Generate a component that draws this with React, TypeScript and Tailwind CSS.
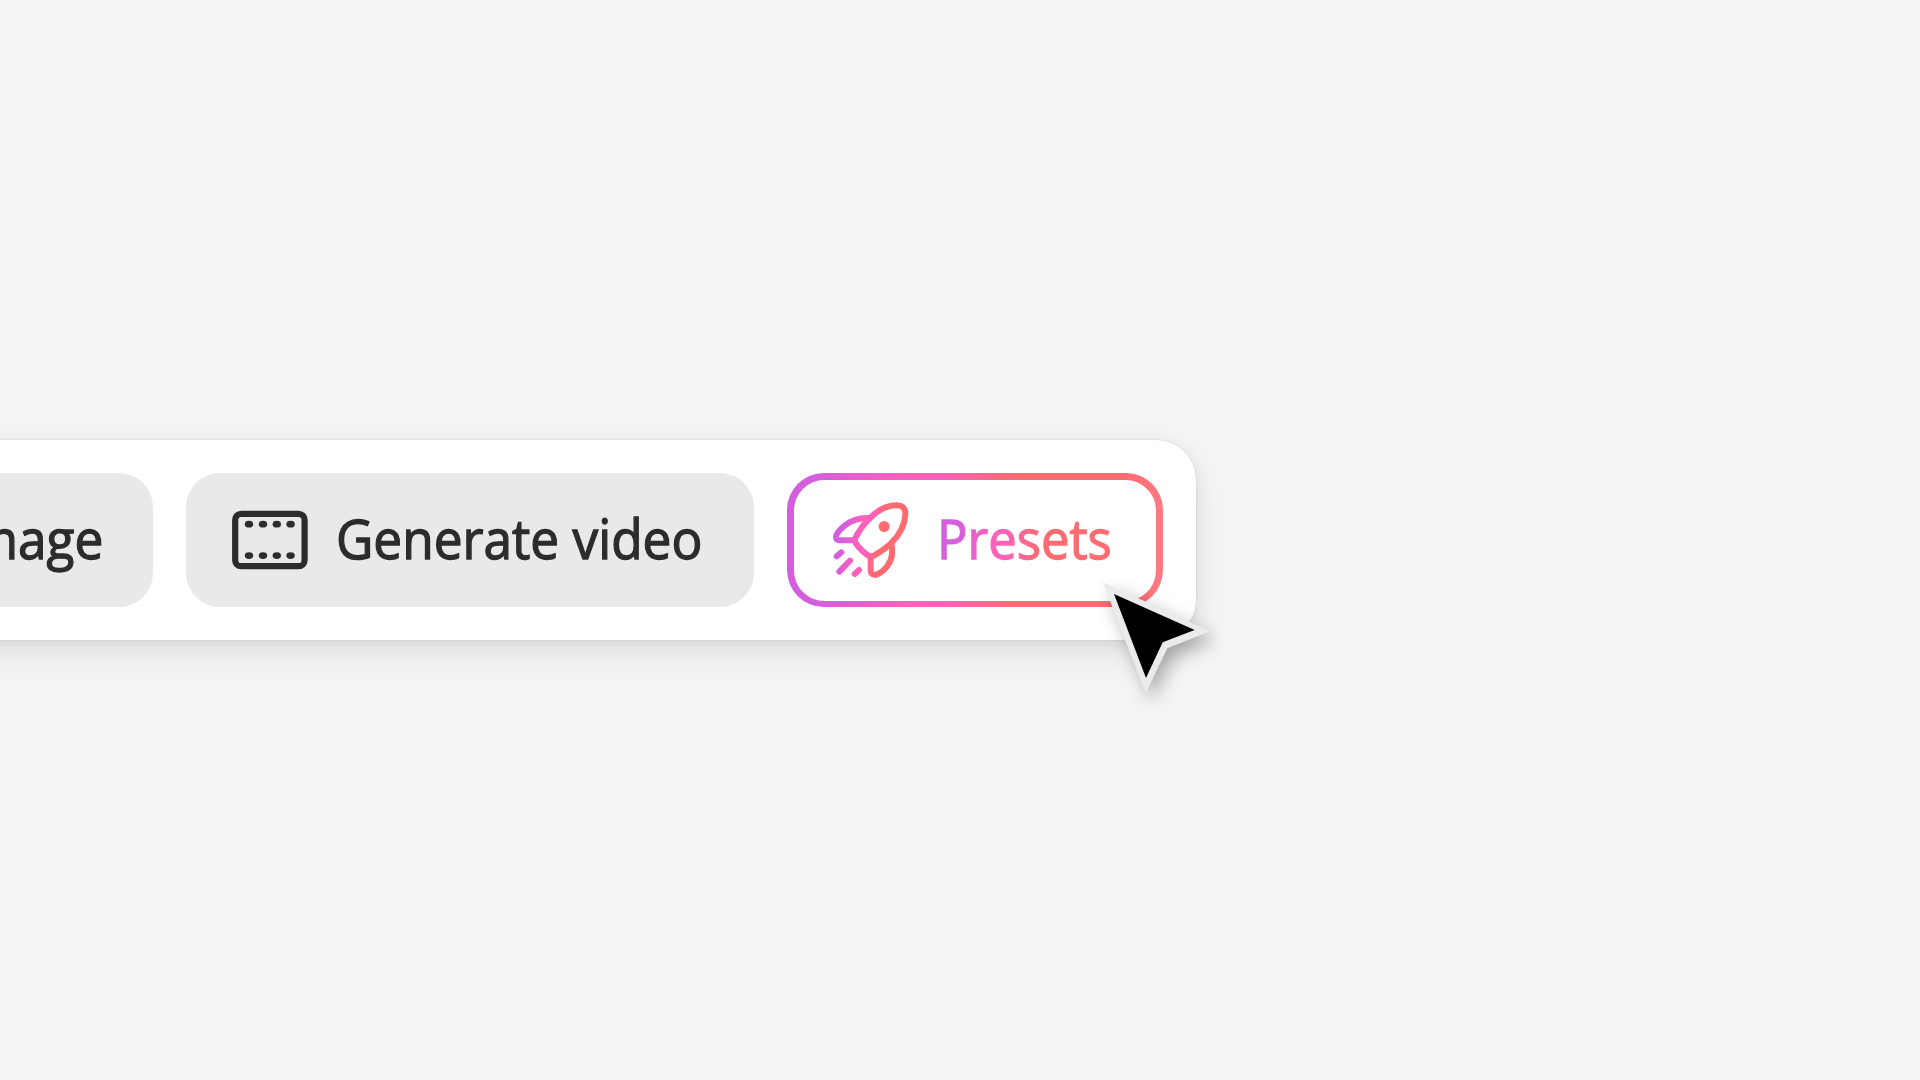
import React from 'react';

interface ToolButtonProps {
    label: string;
    icon: React.ReactNode;
    className?: string;
}

function FilmIcon() {
    return (
        <svg className="w-[76px] h-[60px] shrink-0" viewBox="0 0 76 60" fill="none">
            <rect x="3.2" y="3.8" width="69.4" height="52.4" rx="6" stroke="#2c2c2c" strokeWidth="6.2" />
            {[17, 31, 44.8, 58.6].map((x) => (
                <g key={x} fill="#2c2c2c">
                    <ellipse cx={x} cy="14.2" rx="4.2" ry="3.4" />
                    <ellipse cx={x} cy="45.6" rx="4.2" ry="3.4" />
                </g>
            ))}
        </svg>
    );
}

function RocketIcon() {
    return (
        <svg className="w-[100px] h-[100px] shrink-0" viewBox="0 0 300 300" fill="none">
            <defs>
                <linearGradient id="rocket" gradientUnits="userSpaceOnUse" x1="48" y1="160" x2="190" y2="190">
                    <stop offset="0" stopColor="#d35fdc" />
                    <stop offset="0.1" stopColor="#d35fdc" />
                    <stop offset="0.48" stopColor="#ff62b8" />
                    <stop offset="0.64" stopColor="#ff62b8" />
                    <stop offset="0.88" stopColor="#ff6b70" />
                </linearGradient>
            </defs>
            <g stroke="url(#rocket)" strokeWidth="18" strokeLinecap="round" strokeLinejoin="round">
                <path d="M103 150C114 127 130 103 150 84C173 61 203 46 229 46C247 46 257 56 256 73C255 103 237 136 213 160C197 175 179 187 162 197C155 201 148 200 142 195C125 182 109 168 103 150Z" />
                <path d="M150 84C120 82 94 91 75 106C60 118 48 132 48 142C48 149 54 151 62 151H103" />
                <path d="M152 199V240C152 252 161 258 172 253C196 242 214 218 216 193C217 180 217 172 214 160" />
                <path d="M50 199L64 187M58 245L90 212M104 252L117 240" />
            </g>
            <circle cx="192.500" cy="109.500" r="16.500" fill="#ff6b70" />
        </svg>
    );
}

function ImageIcon() {
    return (
        <svg className="w-[76px] h-[60px] shrink-0" viewBox="0 0 76 60" fill="none" stroke="#2c2c2c" strokeWidth="6.2">
            <rect x="3.2" y="3.8" width="69.4" height="52.4" rx="6" />
            <path d="M4 46L26 26L42 42L52 34L72 50" strokeLinejoin="round" />
        </svg>
    );
}

function ToolButton({ label, icon, className = '' }: ToolButtonProps) {
    return (
        <button className={`flex items-center shrink-0 h-[134px] rounded-[34px] bg-[#e9e9e9] text-[#2c2c2c] pl-[46px] gap-[28px] ${className}`}>
            {icon}
            <span className="origin-left scale-x-[0.951] pb-[4px] [-webkit-text-stroke:1.3px_#2c2c2c]">{label}</span>
        </button>
    );
}

function Cursor() {
    return (
        <svg className="absolute right-[-44px] top-[130px] w-[150px] h-[150px] overflow-visible drop-shadow-[6px_8px_9px_rgba(0,0,0,0.3)]" viewBox="0 0 450 450">
            <path d="M38 36L360 184L232 235L167 370Z" fill="#ebebeb" />
            <path d="M72 72L314 180L218 217L168 324Z" fill="#000" />
        </svg>
    );
}

export default function App() {
    return (
        <div className="w-full h-screen overflow-hidden bg-[#f5f5f5] pt-[440px] font-['Open_Sans',sans-serif] text-[54px] leading-none font-medium whitespace-nowrap">
            {/* Toolbar, runs off the left edge */}
            <div className="relative -ml-[80px] w-[1276px] h-[200px] flex items-center justify-end gap-[33px] pr-[33.5px] bg-white rounded-r-[40px] shadow-[0_0_2px_rgba(0,0,0,0.12),0_3px_14px_rgba(0,0,0,0.06),0_12px_36px_rgba(0,0,0,0.09)]">
                <ToolButton label="Generate image" icon={<ImageIcon />} className="w-[582px]" />
                <ToolButton label="Generate video" icon={<FilmIcon />} className="w-[568px]" />

                {/* Active button */}
                <button className="shrink-0 w-[375.5px] h-[134px] p-[6.5px] rounded-[37px] bg-[linear-gradient(90deg,#d35fdc_8%,#ff62b8_34%,#ff62b8_42%,#ff6b70_61%,#ff6b70_90%,#ff7a84_100%)]">
                    <span className="flex items-center w-full h-full pl-[26px] rounded-[30.5px] bg-white">
                        <RocketIcon />
                        <span className="ml-[17px] pt-2 pb-[12px] origin-left scale-x-[0.94] text-transparent bg-clip-text [-webkit-text-stroke:1.3px_transparent] bg-[linear-gradient(90deg,#d35fdc_12%,#ff62b8_32%,#ff62b8_40%,#ff6b70_58%)]">Presets</span>
                    </span>
                </button>

                <Cursor />
            </div>
        </div>
    );
}
